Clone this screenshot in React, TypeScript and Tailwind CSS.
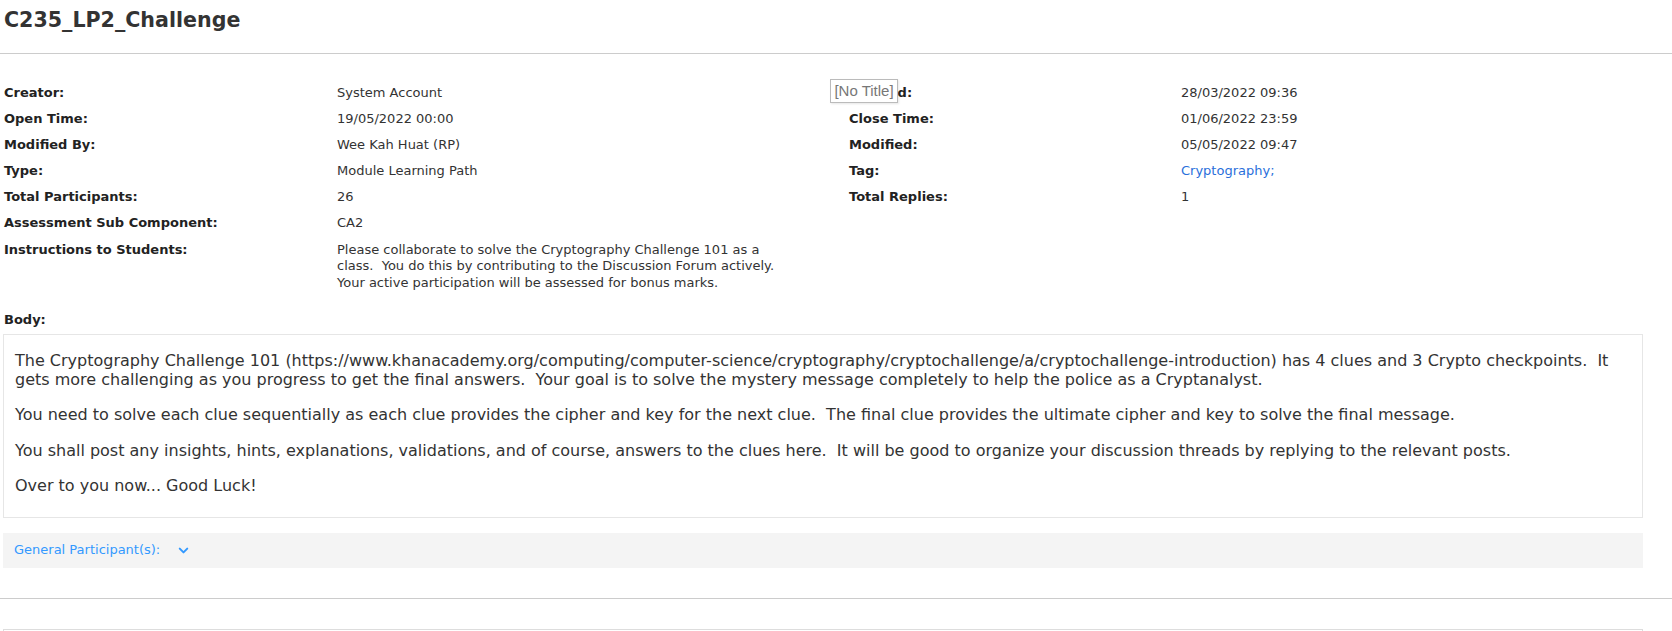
import { ChevronDown } from "lucide-react";

const leftRows: [string, string][] = [
  ["Creator:", "System Account"],
  ["Open Time:", "19/05/2022 00:00"],
  ["Modified By:", "Wee Kah Huat (RP)"],
  ["Type:", "Module Learning Path"],
  ["Total Participants:", "26"],
  ["Assessment Sub Component:", "CA2"],
];

const rightRows: [string, string][] = [
  ["Created:", "28/03/2022 09:36"],
  ["Close Time:", "01/06/2022 23:59"],
  ["Modified:", "05/05/2022 09:47"],
  ["Tag:", "Cryptography;"],
  ["Total Replies:", "1"],
];

export default function App() {
  return (
    <div className="relative min-h-[631px] bg-white font-['DejaVu_Sans',sans-serif] text-[#222]">
      {/* Title */}
      <div className="h-[54px] border-b border-[#cccccc] px-[4px] pt-[7px]">
        <h1 className="text-[20.6px] font-bold leading-[26px] text-[#333]">C235_LP2_Challenge</h1>
      </div>

      {/* Properties */}
      <div className="flex pt-[31px] text-[13px] leading-[16.5px]">
        <div className="grid w-[849px] grid-cols-[333px_1fr] gap-y-[9.6px] pl-[4px]">
          {leftRows.map(([label, value]) => (
            <div key={label} className="contents">
              <div className="font-bold text-[#222]">{label}</div>
              <div className="text-[#333]">{value}</div>
            </div>
          ))}
          <div className="font-bold text-[#222]">Instructions to Students:</div>
          <div className="whitespace-nowrap text-[#333]">
            <div>Please collaborate to solve the Cryptography Challenge 101 as a</div>
            <div>class.&nbsp; You do this by contributing to the Discussion Forum actively.</div>
            <div>Your active participation will be assessed for bonus marks.</div>
          </div>
        </div>
        <div className="grid flex-1 grid-cols-[332px_1fr] content-start gap-y-[9.6px]">
          {rightRows.map(([label, value]) => (
            <div key={label} className="contents">
              <div className="font-bold text-[#222]">{label}</div>
              <div className={label === "Tag:" ? "text-[#2a6fdb]" : "text-[#333]"}>{value}</div>
            </div>
          ))}
        </div>
      </div>

      {/* Body */}
      <div className="w-[1643px] pl-[3px] pt-[21px]">
        <div className="pl-[1px] text-[13px] font-bold leading-[16.5px] text-[#222]">Body:</div>
        <div className="mt-[5px] h-[184px] border border-[#e6e6e6] px-[11px] pt-[16px] text-[16px] leading-[19px] text-[#333]">
          <p className="mb-[16.5px] whitespace-nowrap">
            <span className="block">
              The Cryptography Challenge 101 (https://www.khanacademy.org/computing/computer-science/cryptography/cryptochallenge/a/cryptochallenge-introduction) has 4 clues and 3 Crypto checkpoints.&nbsp; It
            </span>
            <span className="block">
              gets more challenging as you progress to get the final answers.&nbsp; Your goal is to solve the mystery message completely to help the police as a Cryptanalyst.
            </span>
          </p>
          <p className="mb-[16.5px]">
            You need to solve each clue sequentially as each clue provides the cipher and key for the next clue.&nbsp; The final clue provides the ultimate cipher and key to solve the final message.
          </p>
          <p className="mb-[16.5px]">
            You shall post any insights, hints, explanations, validations, and of course, answers to the clues here.&nbsp; It will be good to organize your discussion threads by replying to the relevant posts.
          </p>
          <p>Over to you now... Good Luck!</p>
        </div>

        {/* Participants */}
        <div className="mt-[15px] flex h-[35px] items-center gap-[16px] bg-[#f4f4f4] px-[11px] text-[13px] text-[#3399ff]">
          <span>General Participant(s):</span>
          <ChevronDown className="h-[15px] w-[15px]" strokeWidth={3.2} />
        </div>
      </div>

      <div className="mt-[30px] border-t border-[#cccccc]" />
      <div className="ml-[3px] mt-[30px] h-[10px] w-[1640px] border border-b-0 border-[#dddddd]" />

      {/* Tooltip */}
      <div className="absolute left-[830px] top-[79px] h-[24px] w-[68px] border border-[#bbbbbb] bg-white text-center font-['Liberation_Sans',sans-serif] text-[15px] leading-[22px] text-[#777] shadow-[1px_1px_2px_rgba(0,0,0,0.1)]">
        [No Title]
      </div>
    </div>
  );
}
